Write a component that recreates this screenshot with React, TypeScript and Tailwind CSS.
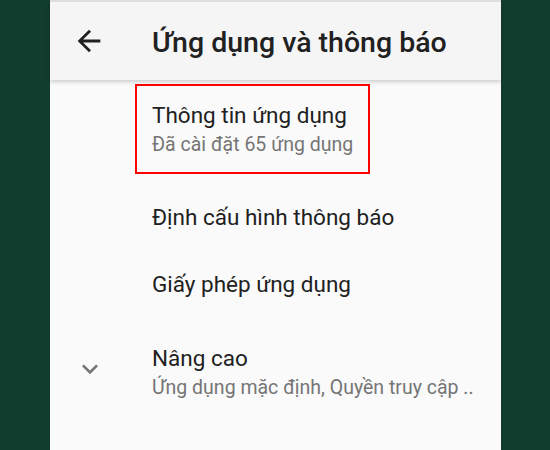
import React from "react";

const font = { fontFamily: "Roboto, 'Noto Sans', sans-serif" };

export default function App() {
  return (
    <div className="w-[550px] h-[450px] bg-[#123c2e] flex overflow-hidden" style={font}>
      <div className="ml-[50px] w-[451px] h-full bg-[#fafafa] flex flex-col">
        <div className="relative z-10 h-[80px] shrink-0 bg-[#f5f5f5] border-t-2 border-[#dedede] shadow-[0_2px_4px_rgba(0,0,0,0.18)] flex items-start">
          <svg viewBox="0 0 24 24" className="w-[34px] h-[34px] ml-[22px] mt-[22px] shrink-0" fill="#212121">
            <path d="M20 11H7.83l5.59-5.59L12 4l-8 8 8 8 1.41-1.41L7.83 13H20v-2z" />
          </svg>
          <div className="ml-[46px] mt-[25px] text-[28.5px] leading-[32px] font-medium text-[#212121] whitespace-nowrap">
            Ứng dụng và thông báo
          </div>
        </div>

        <div className="flex flex-col">
          <div className="ml-[85px] mt-[4px] w-[235px] h-[90px] border-2 border-[#ff0000] pl-[15px] pt-[15px]">
            <div className="text-[22.5px] leading-[28px] text-[#212121] whitespace-nowrap">Thông tin ứng dụng</div>
            <div className="mt-1 text-[19.5px] leading-[24px] text-[#757575] whitespace-nowrap">Đã cài đặt 65 ứng dụng</div>
          </div>

          <div className="ml-[102px] mt-[29px] text-[22.5px] leading-[28px] text-[#212121] whitespace-nowrap">
            Định cấu hình thông báo
          </div>

          <div className="ml-[102px] mt-[39px] text-[22.5px] leading-[28px] text-[#212121] whitespace-nowrap">
            Giấy phép ứng dụng
          </div>

          <div className="mt-[46px] flex items-start">
            <div className="w-[102px] shrink-0 pl-[24px]">
              <svg viewBox="0 0 24 24" className="w-[32px] h-[32px] mt-[9px]" fill="#757575">
                <path d="M16.59 8.59L12 13.17 7.41 8.59 6 10l6 6 6-6z" />
              </svg>
            </div>
            <div className="min-w-0">
              <div className="text-[22.5px] leading-[28px] text-[#212121] whitespace-nowrap">Nâng cao</div>
              <div className="mt-1 text-[19.5px] leading-[24px] text-[#757575] whitespace-nowrap">
                Ứng dụng mặc định, Quyền truy cập ..
              </div>
            </div>
          </div>
        </div>
      </div>
    </div>
  );
}
